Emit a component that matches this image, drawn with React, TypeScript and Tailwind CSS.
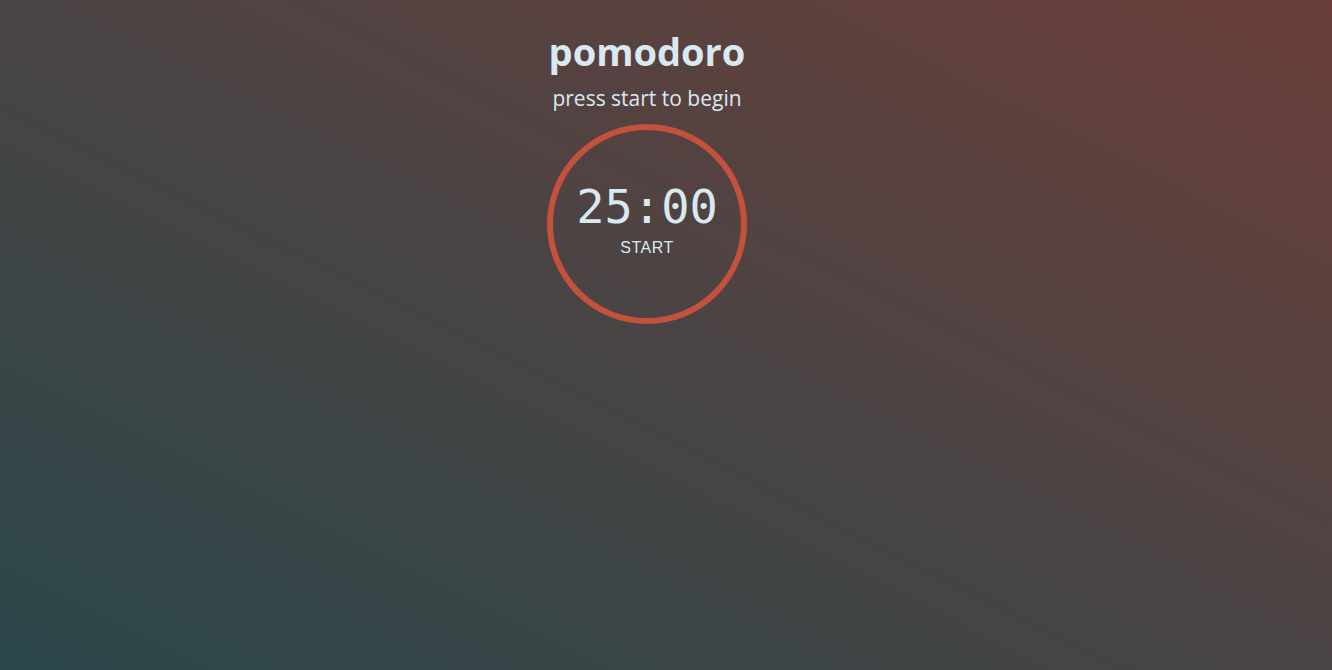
import React from 'react';

const Timer = () => {
  return (
    <div className="relative w-[200px] h-[200px] rounded-full border-[6px] border-[#c4513c] flex flex-col items-center justify-center">
      <span className="text-[47px] leading-none text-[#d9e9f1] font-['DejaVu_Sans_Mono',monospace] -mt-[10px]">
        25:00
      </span>
      <button className="mt-[10px] text-[16px] leading-none text-[#d9e9f1] font-['Liberation_Sans',Arial,sans-serif] tracking-[0.5px]">
        START
      </button>
    </div>
  );
};

export default function App() {
  return (
    <div className="w-full h-[670px] overflow-hidden bg-[linear-gradient(to_bottom_left,#6b3e39_0%,#4a4444_50%,#2b474a_100%)]">
      <div className="flex flex-col items-center pt-[27px] pr-[38px]">
        <h1 className="text-[38px] leading-[48px] font-bold text-[#d9e9f1] font-['Open_Sans',sans-serif]">
          pomodoro
        </h1>
        <p className="mt-[9px] text-[21px] leading-[28px] text-[#d9e9f1] font-['Open_Sans',sans-serif]">
          press start to begin
        </p>
        <div className="mt-[12px]">
          <Timer />
        </div>
      </div>
    </div>
  );
}
